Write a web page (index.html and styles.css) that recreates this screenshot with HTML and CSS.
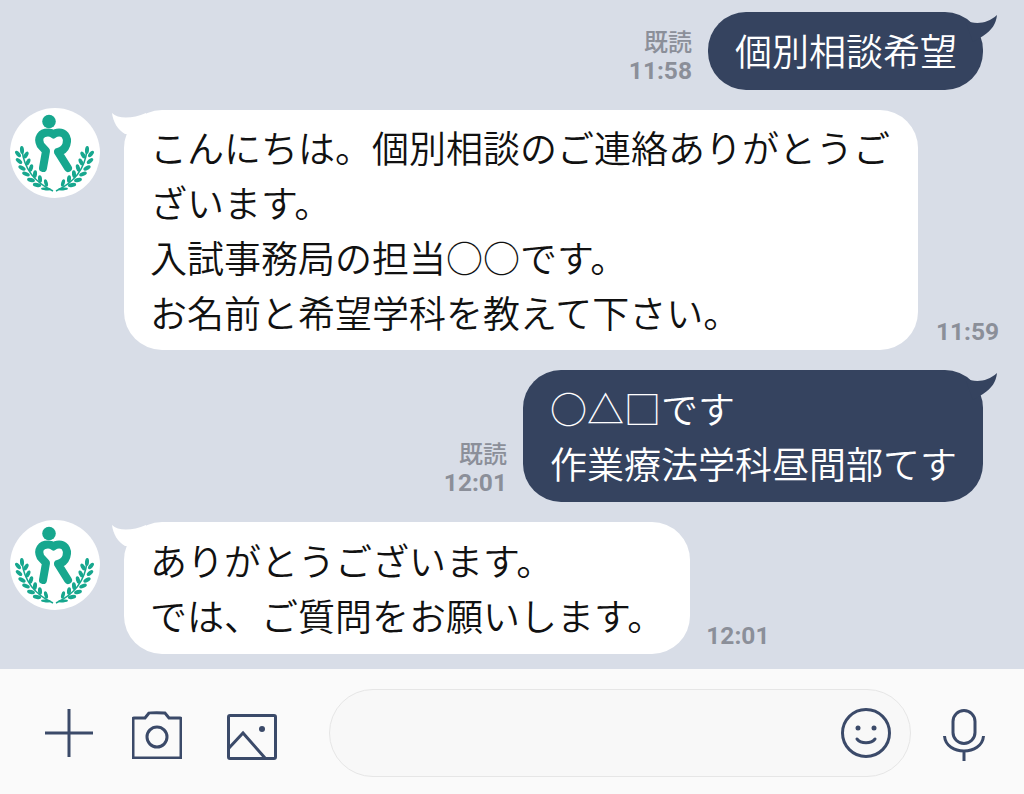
FILE: index.html
```html
<!DOCTYPE html>
<html lang="ja">
<head>
    <meta charset="UTF-8">
    <meta name="viewport" content="width=device-width, initial-scale=1.0">
    <title>トーク</title>
    <link rel="stylesheet" href="styles.css">
</head>
<body>
    <!-- Shared logo -->
    <svg class="defs" width="0" height="0" aria-hidden="true">
        <symbol id="logo" viewBox="0 0 90 90">
            <circle cx="39" cy="13.500" r="6.800" fill="#17a78e"/>
            <path d="M33 60 L36 43 L30.500 37 C27 30 31 24.500 38 24.500 C40 24.500 42 25 43.500 26.500 C46 24 52 23.500 55 27 C59 32 57 42 48 44 L58 60" fill="none" stroke="#17a78e" stroke-width="8" stroke-linecap="round" stroke-linejoin="round"/>
            <g id="laurel" fill="#17a78e">
                <path d="M12 42 C14 60 24 74 43 83" fill="none" stroke="#17a78e" stroke-width="1.600"/>
                <ellipse cx="12" cy="42" rx="2" ry="4" transform="rotate(-5 12 42)"/>
                <ellipse cx="8" cy="46" rx="2" ry="3.800" transform="rotate(-40 8 46)"/>
                <ellipse cx="16" cy="47" rx="2" ry="3.800" transform="rotate(30 16 47)"/>
                <ellipse cx="9" cy="53" rx="2" ry="3.800" transform="rotate(-50 9 53)"/>
                <ellipse cx="18" cy="54" rx="2" ry="3.800" transform="rotate(25 18 54)"/>
                <ellipse cx="12" cy="60" rx="2" ry="4" transform="rotate(-60 12 60)"/>
                <ellipse cx="21" cy="60" rx="2" ry="3.800" transform="rotate(15 21 60)"/>
                <ellipse cx="16" cy="66" rx="2" ry="4" transform="rotate(-68 16 66)"/>
                <ellipse cx="25" cy="66" rx="2" ry="3.800" transform="rotate(5 25 66)"/>
                <ellipse cx="21" cy="72" rx="2" ry="4" transform="rotate(-75 21 72)"/>
                <ellipse cx="30" cy="71" rx="2" ry="3.800" transform="rotate(-5 30 71)"/>
                <ellipse cx="27" cy="77" rx="2" ry="4.200" transform="rotate(-80 27 77)"/>
                <ellipse cx="36" cy="75" rx="1.800" ry="3.800" transform="rotate(-15 36 75)"/>
                <ellipse cx="36" cy="81" rx="1.400" ry="5" transform="rotate(-85 36 81)"/>
            </g>
            <use href="#laurel" transform="matrix(-1 0 0 1 89 0)"/>
        </symbol>
    </svg>

    <main class="chat">
        <div class="row row-me">
            <div class="meta">
                <span class="read">既読</span>
                <span class="time">11:58</span>
            </div>
            <div class="bubble bubble-me">
                個別相談希望
                <svg class="tail tail-me" width="34" height="34" viewBox="0 0 34 34"><path d="M2 8 C12 13 24 12 34 3 C33 12 29 18 20 24 L10 30 Z" fill="#35435f"/></svg>
            </div>
        </div>

        <div class="row row-them">
            <div class="avatar"><svg width="90" height="90"><use href="#logo"/></svg></div>
            <div class="bubble bubble-them bubble-long">
                こんにちは。個別相談のご連絡ありがとうご<br>ざいます。<br>入試事務局の担当○○です。<br>お名前と希望学科を教えて下さい。
                <svg class="tail tail-them" width="40" height="30" viewBox="0 0 40 30"><path d="M2 3 C8 9 22 9 36 3 L40 25 L15 24 C8 20 3 12 2 3 Z" fill="#fff"/></svg>
            </div>
            <div class="meta meta-them"><span class="time">11:59</span></div>
        </div>

        <div class="row row-me">
            <div class="meta">
                <span class="read">既読</span>
                <span class="time">12:01</span>
            </div>
            <div class="bubble bubble-me">
                ○△□です<br>作業療法学科昼間部てす
                <svg class="tail tail-me" width="34" height="34" viewBox="0 0 34 34"><path d="M2 8 C12 13 24 12 34 3 C33 12 29 18 20 24 L10 30 Z" fill="#35435f"/></svg>
            </div>
        </div>

        <div class="row row-them">
            <div class="avatar"><svg width="90" height="90"><use href="#logo"/></svg></div>
            <div class="bubble bubble-them bubble-short">
                ありがとうございます。<br>では、ご質問をお願いします。
                <svg class="tail tail-them" width="40" height="30" viewBox="0 0 40 30"><path d="M2 3 C8 9 22 9 36 3 L40 25 L15 24 C8 20 3 12 2 3 Z" fill="#fff"/></svg>
            </div>
            <div class="meta meta-them"><span class="time">12:01</span></div>
        </div>
    </main>

    <footer class="composer">
        <svg class="icon" width="50" height="50" viewBox="0 0 50 50"><path d="M25 1 V49 M1 25 H49"/></svg>
        <svg class="icon icon-camera" width="50" height="48" viewBox="0 0 50 48"><path d="M2 7 H13 L17 2 C18 1.500 31 1.500 33 2 L37 7 H48 C49 7 49 8 49 8 V46 C49 47 48 47 48 47 H2 C1 47 1 46 1 46 V8 C1 7 2 7 2 7 Z"/><circle cx="25" cy="26" r="10"/></svg>
        <svg class="icon icon-image" width="50" height="46" viewBox="0 0 50 46"><rect x="1.500" y="1.500" width="47" height="43" rx="1.500"/><path d="M2 34 L16 19 L38 44"/><circle class="dot" cx="35" cy="15" r="3"/></svg>
        <div class="input">
            <svg class="icon" width="50" height="50" viewBox="0 0 50 50"><circle cx="25" cy="25" r="23.500"/><path d="M16 31 C20 36 30 36 34 31" stroke-linecap="round"/><circle class="dot" cx="17" cy="20" r="2.500"/><circle class="dot" cx="33" cy="20" r="2.500"/></svg>
        </div>
        <svg class="icon icon-mic" width="42" height="52" viewBox="0 0 42 52"><rect x="10" y="1.500" width="22" height="33" rx="11"/><path d="M1.500 27 C3 47 39 47 40.500 27 M21 41 V52"/></svg>
    </footer>
</body>
</html>
```

FILE: styles.css
```css
html, body {
    height: 100%;
}
body {
    margin: 0;
    height: 794px;
    overflow: hidden;
    display: flex;
    flex-direction: column;
    background-color: #d8dde7;
    font-family: "Noto Sans CJK JP", "Noto Sans", sans-serif;
}
.defs {
    position: absolute;
}
.chat {
    flex: 1;
    display: flex;
    flex-direction: column;
    gap: 20px;
    padding-top: 12px;
}
.row {
    display: flex;
    align-items: flex-end;
}
.row-me {
    justify-content: flex-end;
    padding-right: 41px;
}
.row-them {
    align-items: flex-start;
    padding-left: 10px;
}
.avatar {
    width: 90px;
    height: 90px;
    margin-top: -2px;
    margin-right: 24px;
    border-radius: 50%;
    background-color: #fff;
}
.avatar svg {
    display: block;
}
.bubble {
    position: relative;
    padding: 11px 28px 11px 26px;
    font-size: 37px;
    font-weight: 350;
    line-height: 55px;
    white-space: nowrap;
    border-radius: 38px;
}
.bubble-me {
    min-height: 56px;
    padding-left: 27px;
    padding-right: 26px;
    background-color: #35435f;
    color: #fff;
}
.bubble-them {
    background-color: #fff;
    color: #111;
}
.bubble-long {
    padding-top: 10px;
    padding-bottom: 10px;
}
.bubble-short {
    padding-right: 26px;
}
.bubble-short + .meta-them {
    margin-left: 16px;
}
.tail {
    position: absolute;
}
.tail-me {
    top: 0;
    right: -14px;
}
.tail-them {
    top: 0;
    left: -14px;
}
.meta {
    display: flex;
    flex-direction: column;
    align-items: flex-end;
    margin-right: 16px;
    margin-bottom: 4px;
    color: #8b8f99;
    font-family: Roboto, "Noto Sans CJK JP", sans-serif;
    font-weight: 700;
    font-size: 24.500px;
    line-height: 30px;
}
.meta-them {
    align-self: flex-end;
    margin-left: 18px;
    margin-right: 0;
    margin-bottom: 3px;
}
.read {
    font-family: "Noto Sans CJK JP", sans-serif;
    font-weight: 500;
    font-size: 24px;
}
.composer {
    height: 125px;
    box-sizing: border-box;
    display: flex;
    align-items: center;
    padding: 3px 0 0 44px;
    background-color: #fafafa;
}
.icon {
    display: block;
    flex: none;
    fill: none;
    stroke: #3b4a69;
    stroke-width: 3;
}
.icon .dot {
    fill: #3b4a69;
    stroke: none;
}
.icon-camera {
    margin-top: 4px;
    margin-left: 38px;
}
.icon-image {
    margin-top: 7px;
    margin-left: 45px;
}
.icon-mic {
    margin-top: 4px;
    margin-left: 32px;
}
.input {
    width: 582px;
    height: 88px;
    box-sizing: border-box;
    margin-left: 52px;
    padding-right: 19px;
    display: flex;
    align-items: center;
    justify-content: flex-end;
    border: 1px solid #e6e6e6;
    border-radius: 44px;
    background-color: #f8f8f8;
}
```
